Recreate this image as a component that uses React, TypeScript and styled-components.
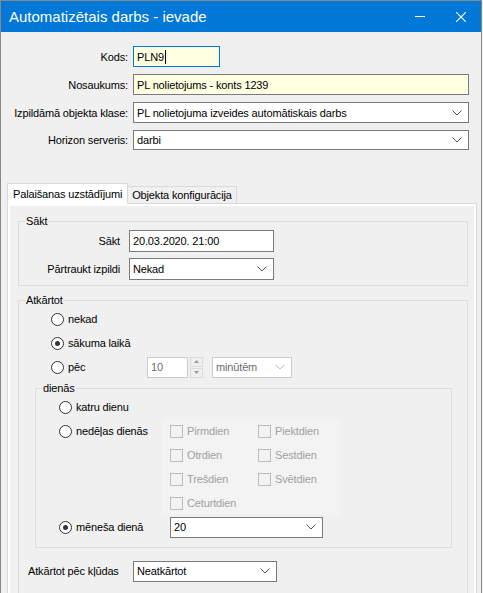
import { createGlobalStyle, styled } from "styled-components";

const GlobalStyle = createGlobalStyle`
  html, body {
    margin: 0;
    padding: 0;
    background: #f0f0f0;
    overflow: hidden;
  }
  body {
    font-family: "Liberation Sans", Arial, sans-serif;
    font-size: 11px;
    letter-spacing: -0.15px;
    color: #000;
  }
  * {
    box-sizing: border-box;
  }
`;

const Window = styled.div`
  width: 482px;
  height: 593px;
  border: 1px solid #888;
  border-bottom: none;
  background: #f0f0f0;
  overflow: hidden;
`;

const TitleBar = styled.div`
  height: 31px;
  background: #0078d7;
  color: #fff;
  display: flex;
  align-items: center;
  padding-left: 8px;
  font-size: 15px;
  letter-spacing: 0;
`;

const Title = styled.div`
  flex: 1;
`;

const TitleButton = styled.div`
  width: 41px;
  height: 31px;
  display: flex;
  align-items: center;
  justify-content: center;
`;

const MinimizeLine = styled.div`
  width: 10px;
  height: 1px;
  background: #fff;
`;

const TopForm = styled.div`
  display: grid;
  grid-template-columns: 127px 1fr;
  column-gap: 5px;
  row-gap: 7px;
  padding: 14px 12px 0 0;
  align-items: center;
`;

const Label = styled.label<{ $width?: number }>`
  text-align: right;
  white-space: nowrap;
  ${(p) => (p.$width ? `width: ${p.$width}px; text-align: left; flex: none;` : "")}
`;

const TextInput = styled.div<{ $width?: number; $height?: number; $focused?: boolean; $yellow?: boolean }>`
  height: ${(p) => p.$height ?? 21}px;
  width: ${(p) => (p.$width ? `${p.$width}px` : "100%")};
  border: 1px solid ${(p) => (p.$focused ? "#0078d7" : "#7a7a7a")};
  background: ${(p) => (p.$yellow ? "#ffffe1" : "#fff")};
  padding: 0 3px;
  display: flex;
  align-items: center;
  white-space: nowrap;
`;

const Caret = styled.span`
  display: inline-block;
  width: 1px;
  height: 14px;
  background: #000;
  margin-left: 1px;
`;

const ComboBox = styled.div<{ $width?: number; $height?: number; $disabled?: boolean }>`
  height: ${(p) => p.$height ?? 21}px;
  width: ${(p) => (p.$width ? `${p.$width}px` : "100%")};
  border: 1px solid ${(p) => (p.$disabled ? "#cccccc" : "#7a7a7a")};
  background: #fff;
  color: ${(p) => (p.$disabled ? "#6d6d6d" : "#000")};
  padding: 0 3px;
  display: flex;
  align-items: center;
  justify-content: space-between;
  white-space: nowrap;
  flex: none;
`;

const Chevron = ({ disabled }: { disabled?: boolean }) => (
  <svg width="10" height="6" viewBox="0 0 10 6" style={{ marginRight: 3 }}>
    <path
      d="M0.5 0.5 L5 5 L9.5 0.5"
      fill="none"
      stroke={disabled ? "#bdbdbd" : "#555"}
      strokeWidth="1"
    />
  </svg>
);

const TabStrip = styled.div`
  display: flex;
  align-items: flex-end;
  margin: 33px 0 0 6px;
  position: relative;
  z-index: 1;
`;

const Tab = styled.div<{ $active?: boolean }>`
  height: ${(p) => (p.$active ? 21 : 17)}px;
  padding: 0 ${(p) => (p.$active ? 5 : 4)}px;
  background: ${(p) => (p.$active ? "#fff" : "#f0f0f0")};
  border: 1px solid #d9d9d9;
  border-bottom: ${(p) => (p.$active ? "1px solid #fff" : "none")};
  border-left: ${(p) => (p.$active ? "1px solid #d9d9d9" : "none")};
  margin-bottom: ${(p) => (p.$active ? -1 : 0)}px;
  display: flex;
  align-items: center;
  white-space: nowrap;
`;

const TabPanel = styled.div`
  margin: 0 4px 0 6px;
  border: 1px solid #d9d9d9;
  border-bottom: none;
  background: #fff;
  padding: 2px 2px 0 2px;
  height: 400px;
`;

const TabContent = styled.div`
  background: #f0f0f0;
  height: 100%;
  padding: 8px 6px 0 8px;
  display: flex;
  flex-direction: column;
  gap: 7px;
`;

const Group = styled.fieldset<{ $pad?: string; $ml?: number; $mr?: number; $mt?: number }>`
  margin: ${(p) => p.$mt ?? 0}px ${(p) => p.$mr ?? 0}px 0 ${(p) => p.$ml ?? 0}px;
  padding: ${(p) => p.$pad ?? "0"};
  border: 1px solid #dcdcdc;
  min-width: 0;
`;

const Legend = styled.legend`
  margin-left: 6px;
  padding: 0 1px;
  line-height: 14px;
`;

const StartGrid = styled.div`
  display: grid;
  grid-template-columns: 101px 145px;
  column-gap: 9px;
  row-gap: 6px;
  align-items: center;
`;

const Row = styled.div<{ $ml?: number; $h?: number; $mt?: number }>`
  display: flex;
  align-items: center;
  height: ${(p) => p.$h ?? 24}px;
  margin-left: ${(p) => p.$ml ?? 0}px;
  margin-top: ${(p) => p.$mt ?? 0}px;
`;

const RadioLabel = styled.label<{ $width?: number }>`
  display: inline-flex;
  align-items: center;
  gap: 4px;
  white-space: nowrap;
  ${(p) => (p.$width ? `width: ${p.$width}px; flex: none;` : "")}
`;

const RadioCircle = styled.span<{ $checked?: boolean }>`
  width: 13px;
  height: 13px;
  border-radius: 50%;
  border: 1px solid #333;
  background: #fff;
  display: inline-flex;
  align-items: center;
  justify-content: center;
  flex: none;
  &::after {
    content: "";
    width: 5px;
    height: 5px;
    border-radius: 50%;
    background: ${(p) => (p.$checked ? "#333" : "transparent")};
  }
`;

const Radio = ({ label, checked, width }: { label: string; checked?: boolean; width?: number }) => (
  <RadioLabel $width={width}>
    <RadioCircle $checked={checked} />
    {label}
  </RadioLabel>
);

const SpinInput = styled.div`
  width: 41px;
  height: 21px;
  border: 1px solid #cccccc;
  background: #fff;
  color: #6d6d6d;
  padding: 0 3px;
  display: flex;
  align-items: center;
`;

const SpinButtons = styled.div`
  display: flex;
  flex-direction: column;
  gap: 1px;
  margin: 0 9px 0 2px;
`;

const SpinButton = styled.div`
  width: 13px;
  height: 10px;
  border: 1px solid #dcdcdc;
  background: #f0f0f0;
  display: flex;
  align-items: center;
  justify-content: center;
`;

const Arrow = ({ up }: { up?: boolean }) => (
  <svg width="5" height="3" viewBox="0 0 5 3">
    <path d={up ? "M0 3 L2.5 0 L5 3 Z" : "M0 0 L2.5 3 L5 0 Z"} fill="#9a9a9a" />
  </svg>
);

const WeekRow = styled.div`
  display: flex;
  align-items: flex-start;
  margin-left: 23px;
`;

const WeekRadioCell = styled.div`
  width: 103px;
  height: 24px;
  flex: none;
  display: flex;
  align-items: center;
`;

const WeekPanel = styled.div`
  background: #f3f3f3;
  padding-left: 8px;
  width: 178px;
  display: grid;
  grid-auto-flow: column;
  grid-template-rows: repeat(4, 24px);
  grid-template-columns: 88px 82px;
  align-items: center;
`;

const CheckLabel = styled.label`
  display: inline-flex;
  align-items: center;
  gap: 4px;
  color: #a0a0a0;
  white-space: nowrap;
`;

const CheckBox = styled.span`
  width: 13px;
  height: 13px;
  border: 1px solid #bcbcbc;
  flex: none;
`;

const days = ["Pirmdien", "Otrdien", "Trešdien", "Ceturtdien", "Piektdien", "Sestdien", "Svētdien"];

export default function App() {
  return (
    <>
      <GlobalStyle />
      <Window>
        <TitleBar>
          <Title>Automatizētais darbs - ievade</Title>
          <TitleButton>
            <MinimizeLine />
          </TitleButton>
          <TitleButton>
            <svg width="10" height="10" viewBox="0 0 10 10">
              <path d="M0 0 L10 10 M10 0 L0 10" stroke="#fff" strokeWidth="1.1" />
            </svg>
          </TitleButton>
        </TitleBar>

        <TopForm>
          <Label>Kods:</Label>
          <TextInput $width={87} $focused $yellow>
            PLN9
            <Caret />
          </TextInput>
          <Label>Nosaukums:</Label>
          <TextInput $yellow>PL nolietojums - konts 1239</TextInput>
          <Label>Izpildāmā objekta klase:</Label>
          <ComboBox>
            PL nolietojuma izveides automātiskais darbs
            <Chevron />
          </ComboBox>
          <Label>Horizon serveris:</Label>
          <ComboBox $height={20}>
            darbi
            <Chevron />
          </ComboBox>
        </TopForm>

        <TabStrip>
          <Tab $active>Palaišanas uzstādījumi</Tab>
          <Tab>Objekta konfigurācija</Tab>
        </TabStrip>
        <TabPanel>
          <TabContent>
            <Group $pad="2px 0 5px 0">
              <Legend>Sākt</Legend>
              <StartGrid>
                <Label>Sākt</Label>
                <TextInput $height={22}>20.03.2020. 21:00</TextInput>
                <Label>Pārtraukt izpildi</Label>
                <ComboBox $height={22} $width={145}>
                  Nekad
                  <Chevron />
                </ComboBox>
              </StartGrid>
            </Group>

            <Group $pad="0 0 12px 0">
              <Legend>Atkārtot</Legend>
              <Row $ml={32}>
                <Radio label="nekad" />
              </Row>
              <Row $ml={32}>
                <Radio label="sākuma laikā" checked />
              </Row>
              <Row $ml={32}>
                <Radio label="pēc" width={96} />
                <SpinInput>10</SpinInput>
                <SpinButtons>
                  <SpinButton>
                    <Arrow up />
                  </SpinButton>
                  <SpinButton>
                    <Arrow />
                  </SpinButton>
                </SpinButtons>
                <ComboBox $width={80} $disabled>
                  minūtēm
                  <Chevron disabled />
                </ComboBox>
              </Row>

              <Group $ml={16} $mr={15} $mt={2} $pad="0 0 8px 0">
                <Legend>dienās</Legend>
                <Row $ml={23}>
                  <Radio label="katru dienu" />
                </Row>
                <WeekRow>
                  <WeekRadioCell>
                    <Radio label="nedēļas dienās" />
                  </WeekRadioCell>
                  <WeekPanel>
                    {days.map((d) => (
                      <CheckLabel key={d}>
                        <CheckBox />
                        {d}
                      </CheckLabel>
                    ))}
                  </WeekPanel>
                </WeekRow>
                <Row $ml={23}>
                  <Radio label="mēneša dienā" checked width={111} />
                  <ComboBox $width={153}>
                    20
                    <Chevron />
                  </ComboBox>
                </Row>
              </Group>

              <Row $ml={9} $h={22} $mt={12}>
                <Label $width={105}>Atkārtot pēc kļūdas</Label>
                <ComboBox $width={144}>
                  Neatkārtot
                  <Chevron />
                </ComboBox>
              </Row>
            </Group>
          </TabContent>
        </TabPanel>
      </Window>
    </>
  );
}
